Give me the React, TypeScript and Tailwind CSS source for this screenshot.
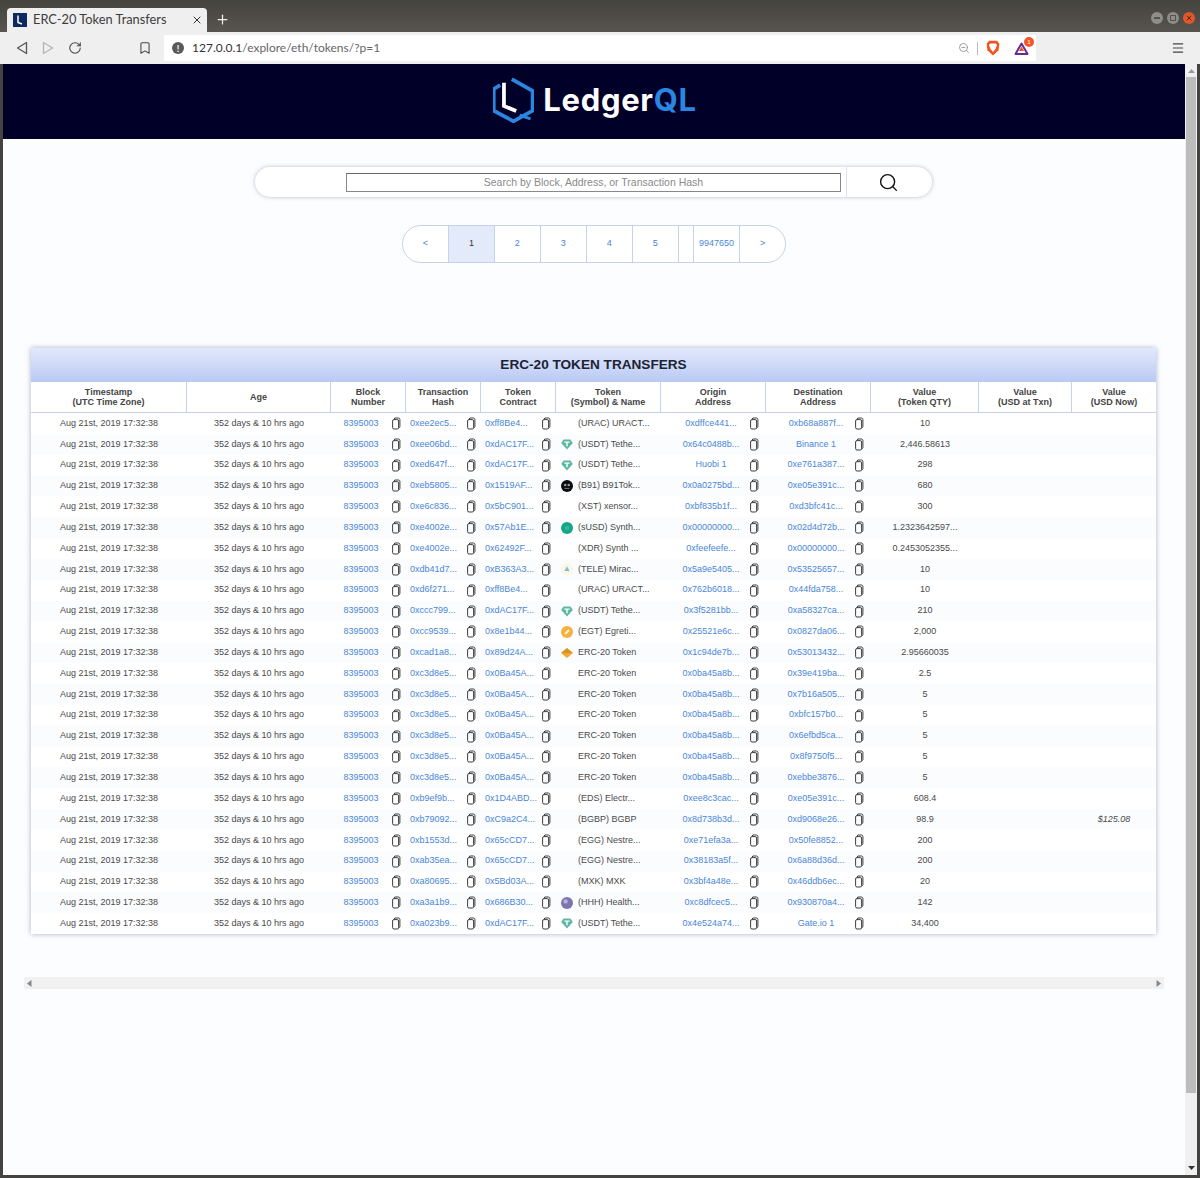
import { Search, RotateCw, Bookmark, Plus, X, Menu, ZoomOut } from 'lucide-react';

type Row = { tx: string; contract: string; icon?: string; token: string; origin: string; dest: string; qty: string; now?: string };

const USDT = '(USDT) Tethe...';
const ERC = 'ERC-20 Token';

const ROWS: Row[] = [
  { tx: '0xee2ec5...', contract: '0xff8Be4...', token: '(URAC) URACT...', origin: '0xdffce441...', dest: '0xb68a887f...', qty: '10' },
  { tx: '0xee06bd...', contract: '0xdAC17F...', icon: 'usdt', token: USDT, origin: '0x64c0488b...', dest: 'Binance 1', qty: '2,446.58613' },
  { tx: '0xed647f...', contract: '0xdAC17F...', icon: 'usdt', token: USDT, origin: 'Huobi 1', dest: '0xe761a387...', qty: '298' },
  { tx: '0xeb5805...', contract: '0x1519AF...', icon: 'b91', token: '(B91) B91Tok...', origin: '0x0a0275bd...', dest: '0xe05e391c...', qty: '680' },
  { tx: '0xe6c836...', contract: '0x5bC901...', token: '(XST) xensor...', origin: '0xbf835b1f...', dest: '0xd3bfc41c...', qty: '300' },
  { tx: '0xe4002e...', contract: '0x57Ab1E...', icon: 'susd', token: '(sUSD) Synth...', origin: '0x00000000...', dest: '0x02d4d72b...', qty: '1.2323642597...' },
  { tx: '0xe4002e...', contract: '0x62492F...', token: '(XDR) Synth ...', origin: '0xfeefeefe...', dest: '0x00000000...', qty: '0.2453052355...' },
  { tx: '0xdb41d7...', contract: '0xB363A3...', icon: 'tele', token: '(TELE) Mirac...', origin: '0x5a9e5405...', dest: '0x53525657...', qty: '10' },
  { tx: '0xd6f271...', contract: '0xff8Be4...', token: '(URAC) URACT...', origin: '0x762b6018...', dest: '0x44fda758...', qty: '10' },
  { tx: '0xccc799...', contract: '0xdAC17F...', icon: 'usdt', token: USDT, origin: '0x3f5281bb...', dest: '0xa58327ca...', qty: '210' },
  { tx: '0xcc9539...', contract: '0x8e1b44...', icon: 'egt', token: '(EGT) Egreti...', origin: '0x25521e6c...', dest: '0x0827da06...', qty: '2,000' },
  { tx: '0xcad1a8...', contract: '0x89d24A...', icon: 'erc', token: ERC, origin: '0x1c94de7b...', dest: '0x53013432...', qty: '2.95660035' },
  { tx: '0xc3d8e5...', contract: '0x0Ba45A...', token: ERC, origin: '0x0ba45a8b...', dest: '0x39e419ba...', qty: '2.5' },
  { tx: '0xc3d8e5...', contract: '0x0Ba45A...', token: ERC, origin: '0x0ba45a8b...', dest: '0x7b16a505...', qty: '5' },
  { tx: '0xc3d8e5...', contract: '0x0Ba45A...', token: ERC, origin: '0x0ba45a8b...', dest: '0xbfc157b0...', qty: '5' },
  { tx: '0xc3d8e5...', contract: '0x0Ba45A...', token: ERC, origin: '0x0ba45a8b...', dest: '0x6efbd5ca...', qty: '5' },
  { tx: '0xc3d8e5...', contract: '0x0Ba45A...', token: ERC, origin: '0x0ba45a8b...', dest: '0x8f9750f5...', qty: '5' },
  { tx: '0xc3d8e5...', contract: '0x0Ba45A...', token: ERC, origin: '0x0ba45a8b...', dest: '0xebbe3876...', qty: '5' },
  { tx: '0xb9ef9b...', contract: '0x1D4ABD...', token: '(EDS) Electr...', origin: '0xee8c3cac...', dest: '0xe05e391c...', qty: '608.4' },
  { tx: '0xb79092...', contract: '0xC9a2C4...', token: '(BGBP) BGBP', origin: '0x8d738b3d...', dest: '0xd9068e26...', qty: '98.9', now: '$125.08' },
  { tx: '0xb1553d...', contract: '0x65cCD7...', token: '(EGG) Nestre...', origin: '0xe71efa3a...', dest: '0x50fe8852...', qty: '200' },
  { tx: '0xab35ea...', contract: '0x65cCD7...', token: '(EGG) Nestre...', origin: '0x38183a5f...', dest: '0x6a88d36d...', qty: '200' },
  { tx: '0xa80695...', contract: '0x5Bd03A...', token: '(MXK) MXK', origin: '0x3bf4a48e...', dest: '0x46ddb6ec...', qty: '20' },
  { tx: '0xa3a1b9...', contract: '0x686B30...', icon: 'hhh', token: '(HHH) Health...', origin: '0xc8dfcec5...', dest: '0x930870a4...', qty: '142' },
  { tx: '0xa023b9...', contract: '0xdAC17F...', icon: 'usdt', token: USDT, origin: '0x4e524a74...', dest: 'Gate.io 1', qty: '34,400' },
];

const HEADERS: [string, string?][] = [
  ['Timestamp', '(UTC Time Zone)'],
  ['Age'],
  ['Block', 'Number'],
  ['Transaction', 'Hash'],
  ['Token', 'Contract'],
  ['Token', '(Symbol) & Name'],
  ['Origin', 'Address'],
  ['Destination', 'Address'],
  ['Value', '(Token QTY)'],
  ['Value', '(USD at Txn)'],
  ['Value', '(USD Now)'],
];

const GRID = 'grid grid-cols-[156px_144px_75px_75px_75px_105px_105px_105px_108px_93px_84px]';
const PAGES = ['<', '1', '2', '3', '4', '5', '', '9947650', '>'];

function CopyIcon() {
  return (
    <svg width="10" height="13" viewBox="0 0 10 13" fill="none" stroke="#333" strokeWidth="0.95" className="shrink-0">
      <rect x="1.6" y="2.6" width="6" height="9.4" rx="1.4" />
      <path d="M3 2.400 3.800 1h3.600c.9 0 1.500.6 1.500 1.500v7c0 .7-.5 1.200-1.300 1.300" />
    </svg>
  );
}

function TokenIcon({ kind }: { kind?: string }) {
  if (kind === 'usdt')
    return (
      <svg width="12" height="11" viewBox="0 0 12 11">
        <path d="M2.6.5h6.8L11.8 4 6 10.6.2 4z" fill="#5cb8a0" />
        <path d="M3.4 2.6h5.2v1.2H6.7v3.4H5.3V3.8H3.4z" fill="#fff" />
      </svg>
    );
  if (kind === 'b91')
    return (
      <svg width="12" height="12" viewBox="0 0 12 12">
        <circle cx="6" cy="6" r="6" fill="#0c0c0c" />
        <circle cx="4.2" cy="5" r="1.3" fill="#999" />
        <circle cx="7.8" cy="5" r="1.3" fill="#999" />
        <path d="M3.5 8.4h5" stroke="#777" />
      </svg>
    );
  if (kind === 'susd')
    return (
      <svg width="12" height="12" viewBox="0 0 12 12">
        <circle cx="6" cy="6" r="6" fill="#17a589" />
        <path d="M3.8 5h4.4M3.8 7h4.4" stroke="#4fc4ab" />
      </svg>
    );
  if (kind === 'tele')
    return (
      <svg width="12" height="12" viewBox="0 0 12 12">
        <circle cx="6" cy="6" r="6" fill="#fdf6e3" />
        <path d="M6 3.2 8.6 8H3.4z" fill="#6cc5e6" />
      </svg>
    );
  if (kind === 'egt')
    return (
      <svg width="12" height="12" viewBox="0 0 12 12">
        <circle cx="6" cy="6" r="6" fill="#f5b041" />
        <path d="M4 8 8 4" stroke="#fff3d0" strokeWidth="2" />
      </svg>
    );
  if (kind === 'erc')
    return (
      <svg width="12" height="10" viewBox="0 0 12 10">
        <path d="M6 0 12 5 6 10 0 5z" fill="#f0a92e" />
        <path d="M6 0 12 5H0z" fill="#c9811a" opacity=".55" />
      </svg>
    );
  if (kind === 'hhh')
    return (
      <svg width="12" height="12" viewBox="0 0 12 12">
        <circle cx="6" cy="6" r="6" fill="#7d74b0" />
        <circle cx="4.6" cy="4.4" r="2.2" fill="#b7b2d8" />
      </svg>
    );
  return null;
}

function LinkCell({ text, align }: { text: string; align: 'block' | 'left' | 'address' }) {
  if (align === 'block')
    return (
      <div className="flex items-center">
        <span className="w-[60px] text-center text-[#4a86d8]">{text}</span>
        <CopyIcon />
      </div>
    );
  if (align === 'left')
    return (
      <div className="flex items-center pl-[4px]">
        <span className="w-[56px] whitespace-nowrap text-[#4a86d8]">{text}</span>
        <CopyIcon />
      </div>
    );
  return (
    <div className="flex items-center pl-[12px]">
      <span className="w-[76px] whitespace-nowrap text-center text-[#4a86d8]">{text}</span>
      <CopyIcon />
    </div>
  );
}

function Logo() {
  return (
    <div className="flex items-center gap-[9px] pl-[2px]">
      <svg width="41" height="46" viewBox="70 35 120 135" fill="none">
        <path d="M125 41 186 76v58l-56 31-58-31V70l19-11" stroke="#2a86e0" strokeWidth="11" />
        <path d="M148 147l32 11" stroke="#2a86e0" strokeWidth="8" />
        <path d="M102 52v68l36 15" stroke="#fff" strokeWidth="11" />
      </svg>
      <div className="font-['Inter',sans-serif] text-[31px] font-bold leading-none tracking-[0.7px] text-white">
        Ledger<span className="text-[#2a86e0]">QL</span>
      </div>
    </div>
  );
}

function BrowserChrome() {
  return (
    <div className="font-['Lato',sans-serif]">
      <div className="flex h-[32px] items-end bg-gradient-to-b from-[#45433e] to-[#585550] pl-[7px]">
        <div className="flex h-[24px] w-[200px] items-center rounded-t-[4px] bg-[#f0efef] pl-[6px] pr-[4px] text-[12.8px] text-[#3c3c3c]">
          <svg width="14" height="14" viewBox="0 0 14 14" className="shrink-0">
            <rect width="14" height="14" fill="#0d2a5e" />
            <path d="M5 2.5v7l4 1.5" stroke="#fff" strokeWidth="1.5" fill="none" />
          </svg>
          <span className="ml-[6px] flex-1 whitespace-nowrap">ERC-20 Token Transfers</span>
          <X size={12} strokeWidth={2} className="text-[#333]" />
        </div>
        <div className="mb-[5px] ml-[8px] text-[#eee]">
          <Plus size={15} strokeWidth={2} />
        </div>
        <div className="mb-[8px] ml-auto mr-[5px] flex items-center gap-[4px]">
          <div className="flex h-[12px] w-[12px] items-center justify-center rounded-full bg-[#8f8d88]">
            <div className="h-[1.5px] w-[6px] bg-[#55534e]" />
          </div>
          <div className="flex h-[12px] w-[12px] items-center justify-center rounded-full bg-[#8f8d88]">
            <div className="h-[6px] w-[6px] border border-[#55534e]" />
          </div>
          <div className="flex h-[12px] w-[12px] items-center justify-center rounded-full bg-[#e2562a]">
            <X size={8} strokeWidth={3} className="text-[#4a2a1a]" />
          </div>
        </div>
      </div>
      <div className="flex h-[32px] items-center bg-[#f0efef]">
        <div className="flex w-[164px] items-center pl-[16px] text-[#444]">
          <svg width="12" height="14" viewBox="0 0 12 14" fill="none" stroke="#555" strokeWidth="1.3" strokeLinejoin="round">
            <path d="M10.5 1.5v11L1.5 7z" />
          </svg>
          <svg width="12" height="14" viewBox="0 0 12 14" fill="none" stroke="#b5b5b5" strokeWidth="1.3" strokeLinejoin="round" className="ml-[14px]">
            <path d="M1.5 1.5v11l9-5.5z" />
          </svg>
          <RotateCw size={14} strokeWidth={1.8} className="ml-[14px]" />
          <Bookmark size={14} strokeWidth={1.8} className="ml-[56px]" />
        </div>
        <div className="flex h-[26px] w-[872px] items-center bg-white pl-[8px]">
          <div className="flex h-[12px] w-[12px] items-center justify-center rounded-full bg-[#5a5a5a] text-[9px] font-bold leading-none text-white">!</div>
          <div className="ml-[8px] text-[12px] text-[#666]"><span className="text-[#333]">127.0.0.1</span>/explore/eth/tokens/?p=1</div>
          <ZoomOut size={12} strokeWidth={1.6} className="ml-auto text-[#888]" />
          <div className="ml-[7px] h-[13px] w-px bg-[#bbb]" />
          <svg width="14" height="16" viewBox="0 0 14 16" className="ml-[8px]">
            <path d="M3 .8h8l2.4 3-.9 6.4L7 15.4 1.500 10.200.6 3.800z" fill="#f0541e" />
            <path d="M4 3.500h6L11 5 9.500 9 7 12 4.500 9 3 5z" fill="#fff" />
          </svg>
          <div className="relative ml-[14px] mr-[7px]">
            <svg width="15" height="13" viewBox="0 0 15 13" fill="none">
              <path d="M7.500 1.500 13.500 12H1.500z" stroke="#662d91" strokeWidth="2" strokeLinejoin="round" />
              <path d="M7.500 4.500 10 9H5z" fill="#ff4724" />
            </svg>
            <div className="absolute left-[10px] top-[-5px] flex h-[10px] w-[10px] items-center justify-center rounded-full bg-[#f0552b] text-[6px] text-white">1</div>
          </div>
        </div>
        <Menu size={14} strokeWidth={2} className="ml-[135px] text-[#444]" />
      </div>
    </div>
  );
}

export default function App() {
  return (
    <div className="flex h-[1178px] w-[1200px] flex-col overflow-hidden bg-[#45433f] font-['Liberation_Sans',Arial,sans-serif]">
      <BrowserChrome />
      <div className="flex min-h-0 flex-1 pb-[3px] pl-[3px] pr-[3px]">
        <main className="w-[1182px] bg-[#fcfdff]">
          <div className="flex h-[75px] items-center justify-center bg-[#000028] pb-[4px]">
            <Logo />
          </div>

          <div className="ml-[252px] mt-[28px] flex h-[30px] w-[677px] items-center rounded-[15px] bg-white shadow-[0_0_4px_rgba(120,130,150,0.5)]">
            <div className="ml-[91px] flex h-[19px] w-[495px] items-center justify-center border border-[#888] border-t-[#666] pt-px text-[10.5px] text-[#8a8a8a]">
              Search by Block, Address, or Transaction Hash
            </div>
            <div className="ml-[5px] flex h-full flex-1 items-center justify-center border-l border-[#dde2ea] pr-[2px]">
              <Search size={21} strokeWidth={1.6} className="text-[#111]" />
            </div>
          </div>

          <div className="ml-[399px] mt-[28px] flex h-[38px] w-[384px] overflow-hidden rounded-full border border-[#c5d2ea] bg-white text-[9px] text-[#4a86d8]">
            {PAGES.map((p, i) => (
              <div
                key={i}
                className={`flex items-center justify-center border-[#c5d2ea] last:border-r-0 border-r ${p === '' ? 'w-[15.5px]' : 'flex-1'} ${p === '1' ? 'bg-[#e3ebfa] text-[#333]' : ''}`}
              >
                {p}
              </div>
            ))}
          </div>

          <section className="ml-[28px] mt-[85px] w-[1125px] bg-white shadow-[0_0_5px_rgba(110,125,160,0.6)]">
            <h1 className="flex h-[34px] items-center justify-center bg-gradient-to-b from-[#e2e9fc] to-[#b9c9f3] text-[13.6px] font-bold text-[#1c2333]">
              ERC-20 TOKEN TRANSFERS
            </h1>
            <div className={`${GRID} h-[31px] border-b border-[#c5d2ee] text-[9px] font-bold leading-[10px] text-[#444]`}>
              {HEADERS.map(([a, b], i) => (
                <div key={i} className="flex flex-col items-center justify-center border-r border-[#c5d2ee] text-center last:border-r-0">
                  <div>{a}</div>
                  {b && <div>{b}</div>}
                </div>
              ))}
            </div>
            {ROWS.map((r, i) => (
              <div key={i} className={`${GRID} h-[20.85px] items-center text-[9px] text-[#4a4a4a] ${i % 2 ? 'bg-[#fbfcfe]' : 'bg-white'}`}>
                <div className="text-center">Aug 21st, 2019 17:32:38</div>
                <div className="text-center">352 days &amp; 10 hrs ago</div>
                <LinkCell text="8395003" align="block" />
                <LinkCell text={r.tx} align="left" />
                <LinkCell text={r.contract} align="left" />
                <div className="flex items-center">
                  <div className="flex w-[22px] justify-center">
                    <TokenIcon kind={r.icon} />
                  </div>
                  <span className="whitespace-nowrap">{r.token}</span>
                </div>
                <LinkCell text={r.origin} align="address" />
                <LinkCell text={r.dest} align="address" />
                <div className="text-center">{r.qty}</div>
                <div />
                <div className="text-center italic">{r.now}</div>
              </div>
            ))}
          </section>

          <div className="ml-[21px] mt-[43px] flex h-[12px] w-[1140px] items-center justify-between bg-[#f1f1f1] px-[3px]">
            <svg width="5" height="7" viewBox="0 0 5 7"><path d="M4.500 0v7L0 3.500z" fill="#888" /></svg>
            <svg width="5" height="7" viewBox="0 0 5 7"><path d="M.5 0v7L5 3.500z" fill="#888" /></svg>
          </div>
        </main>

        <div className="flex w-[12px] flex-col items-center bg-[#f0f0f0]">
          <div className="flex h-[13px] items-center justify-center">
            <svg width="7" height="4" viewBox="0 0 7 4"><path d="M3.500 0 7 4H0z" fill="#999" /></svg>
          </div>
          <div className="h-[1016px] w-[10px] bg-[#bcbcbc]" />
          <div className="mt-auto flex h-[14px] items-center justify-center">
            <svg width="7" height="4" viewBox="0 0 7 4"><path d="M0 0h7L3.500 4z" fill="#333" /></svg>
          </div>
        </div>
      </div>
    </div>
  );
}
